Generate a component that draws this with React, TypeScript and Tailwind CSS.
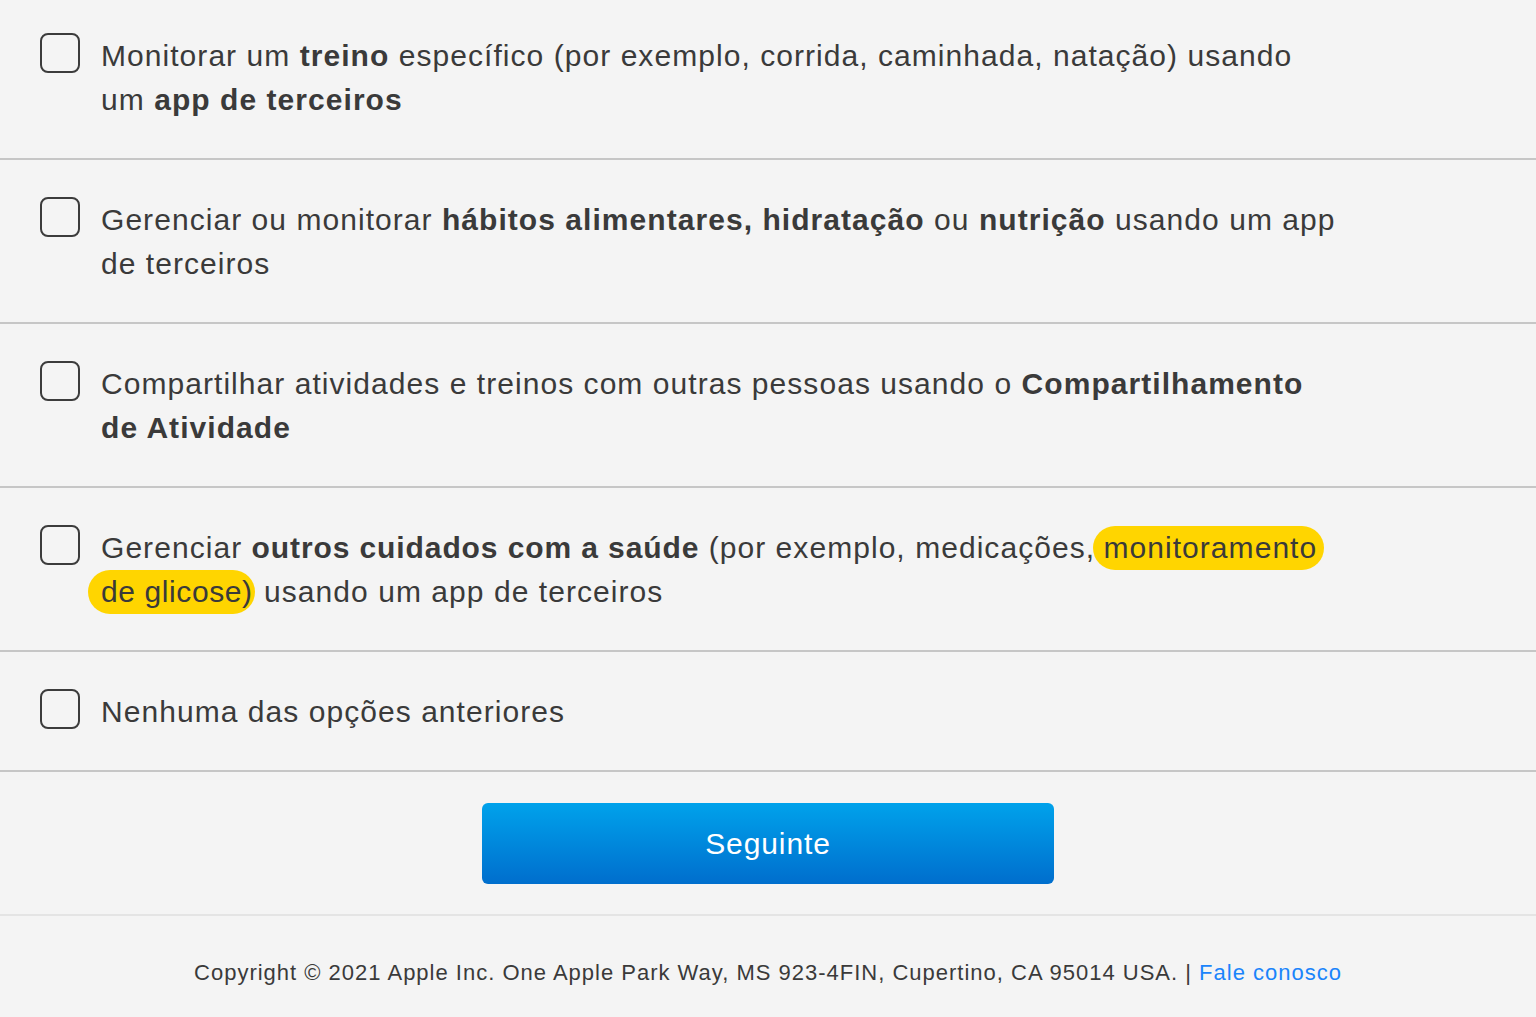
import React from 'react';

const font = { fontFamily: '"Liberation Sans", Arial, sans-serif' };

function Box() {
  return (
    <div className="-mt-[1px] h-[40px] w-[40px] shrink-0 rounded-[8px] border-2 border-[#3c3c3c]" />
  );
}

function Row({ children, first }: { children: React.ReactNode; first?: boolean }) {
  return (
    <div
      className={`flex gap-[21px] border-b-2 border-[#c6c6c6] pl-[40px] ${
        first ? 'pt-[34px] pb-[36px]' : 'pt-[38px] pb-[36px]'
      }`}
    >
      <Box />
      <p className="max-w-[1242px] text-[30px] leading-[44px] tracking-[1.05px] text-[#3a3a3a]">
        {children}
      </p>
    </div>
  );
}

export default function App() {
  return (
    <div className="min-h-[1017px] bg-[#f4f4f4]" style={font}>
      <Row first>
        Monitorar um <b>treino</b> específico (por exemplo, corrida, caminhada, natação) usando um{' '}
        <b>app de terceiros</b>
      </Row>
      <Row>
        Gerenciar ou monitorar <b>hábitos alimentares, hidratação</b> ou <b>nutrição</b> usando um
        app de terceiros
      </Row>
      <Row>
        Compartilhar atividades e treinos com outras pessoas usando o{' '}
        <b>Compartilhamento de Atividade</b>
      </Row>
      <Row>
        Gerenciar <b className="tracking-[0.9px]">outros cuidados com a saúde</b> (por exemplo, medicações,{' '}
        <span className="-ml-[11px] rounded-full bg-[#ffd500] pt-[5px] pb-[6px] pl-[10px] pr-[7px]">
          monitoramento
        </span>{' '}
        <span className="-ml-[13px] rounded-full bg-[#ffd500] pt-[5px] pb-[6px] pl-[13px] pr-[2px] tracking-[0.6px]">
          de glicose)
        </span>{' '}
        usando um app de terceiros
      </Row>
      <Row>Nenhuma das opções anteriores</Row>

      <div className="flex justify-center border-b-2 border-[#e4e4e4] pt-[31px] pb-[30px]">
        <button className="h-[81px] w-[572px] rounded-[6px] bg-gradient-to-b from-[#00a2eb] to-[#006ecd] text-[30px] tracking-[0.9px] text-white">
          Seguinte
        </button>
      </div>

      <footer className="pt-[43px] text-center text-[22px] leading-[28px] tracking-[1px] text-[#3a3a3a]">
        Copyright © 2021 Apple Inc. One Apple Park Way, MS 923-4FIN, Cupertino, CA 95014 USA. |{' '}
        <a className="text-[#1a84fb]">Fale conosco</a>
      </footer>
    </div>
  );
}
